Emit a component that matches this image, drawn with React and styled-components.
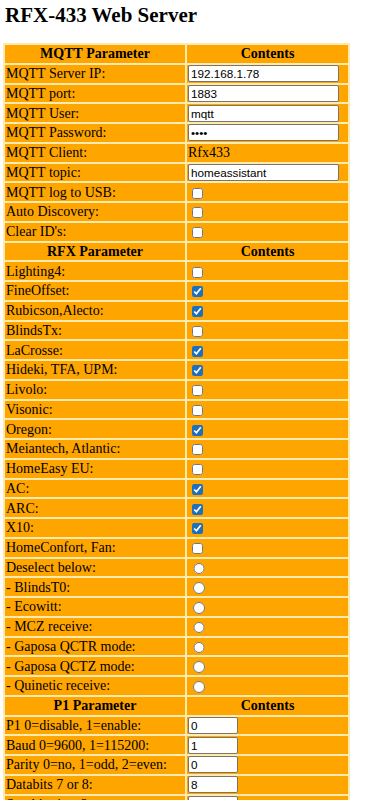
import React from "react";
import styled, { createGlobalStyle } from "styled-components";

const Global = createGlobalStyle`
  html, body { margin: 0; padding: 0; background: #ffffff; }
  body { font-family: "Liberation Serif", "Times New Roman", serif; color: #000; }
`;

const Page = styled.div`
  padding: 4px 0 0 0;
`;

const Title = styled.h1`
  margin: 0 0 16px 5px;
  font-family: "Liberation Serif", "Times New Roman", serif;
  font-size: 21px;
  line-height: 23px;
  font-weight: bold;
`;

const Table = styled.table`
  margin-left: 3px;
  border-collapse: separate;
  border-spacing: 2px;
  background: #ffeab0;
  font-size: 14px;
  table-layout: fixed;
  width: 347px;
`;

const Cell = styled.td`
  background: #ffa500;
  height: 17.76px;
  box-sizing: border-box;
  padding: 0 1px;
  vertical-align: middle;
  white-space: nowrap;
  line-height: 15px;
  font-weight: ${(p) => (p.$head ? "bold" : "normal")};
  text-align: ${(p) => (p.$head ? "center" : "left")};
  width: ${(p) => (p.$left ? "180px" : "auto")};
  overflow: hidden;
`;

const TextInput = styled.input`
  box-sizing: border-box;
  display: block;
  width: ${(p) => p.$w}px;
  height: 17px;
  margin: 0;
  padding: 0 2px;
  border: 1px solid #7d7468;
  border-radius: 2px;
  background: #fff;
  font-family: "Liberation Sans", Arial, sans-serif;
  font-size: 11.7px;
  color: #000;
  outline: none;
`;

const Check = styled.input`
  width: 11px;
  height: 11px;
  margin: 2px 0 0 4px;
  vertical-align: middle;
  accent-color: #1f6fba;
  display: block;
`;

const Radio = styled.input`
  width: 11.5px;
  height: 11.5px;
  margin: 2px 0 0 5px;
  display: block;
`;

const mqtt = [
  ["MQTT Server IP:", { t: "text", v: "192.168.1.78", w: 151 }],
  ["MQTT port:", { t: "text", v: "1883", w: 151 }],
  ["MQTT User:", { t: "text", v: "mqtt", w: 151 }],
  ["MQTT Password:", { t: "password", v: "abcd", w: 151 }],
  ["MQTT Client:", { t: "label", v: "Rfx433" }],
  ["MQTT topic:", { t: "text", v: "homeassistant", w: 151 }],
  ["MQTT log to USB:", { t: "check", c: false }],
  ["Auto Discovery:", { t: "check", c: false }],
  ["Clear ID's:", { t: "check", c: false }],
];

const rfx = [
  ["Lighting4:", false],
  ["FineOffset:", true],
  ["Rubicson,Alecto:", true],
  ["BlindsTx:", false],
  ["LaCrosse:", true],
  ["Hideki, TFA, UPM:", true],
  ["Livolo:", false],
  ["Visonic:", false],
  ["Oregon:", true],
  ["Meiantech, Atlantic:", false],
  ["HomeEasy EU:", false],
  ["AC:", true],
  ["ARC:", true],
  ["X10:", true],
  ["HomeConfort, Fan:", false],
];

const radios = [
  "Deselect below:",
  "- BlindsT0:",
  "- Ecowitt:",
  "- MCZ receive:",
  "- Gaposa QCTR mode:",
  "- Gaposa QCTZ mode:",
  "- Quinetic receive:",
];

const p1 = [
  ["P1 0=disable, 1=enable:", "0"],
  ["Baud 0=9600, 1=115200:", "1"],
  ["Parity 0=no, 1=odd, 2=even:", "0"],
  ["Databits 7 or 8:", "8"],
  ["Stopbits 1 or 2:", "1"],
];

function Value({ spec }) {
  if (spec.t === "label") return <>{spec.v}</>;
  if (spec.t === "check") return <Check type="checkbox" defaultChecked={spec.c} />;
  return <TextInput type={spec.t} defaultValue={spec.v} $w={spec.w} readOnly />;
}

function Head({ name }) {
  return (
    <tr>
      <Cell $head $left>{name}</Cell>
      <Cell $head>Contents</Cell>
    </tr>
  );
}

export default function App() {
  return (
    <Page>
      <Global />
      <Title>RFX-433 Web Server</Title>
      <Table>
        <tbody>
          <Head name="MQTT Parameter" />
          {mqtt.map(([label, spec]) => (
            <tr key={label}>
              <Cell $left>{label}</Cell>
              <Cell>
                <Value spec={spec} />
              </Cell>
            </tr>
          ))}
          <Head name="RFX Parameter" />
          {rfx.map(([label, c]) => (
            <tr key={label}>
              <Cell $left>{label}</Cell>
              <Cell>
                <Check type="checkbox" defaultChecked={c} />
              </Cell>
            </tr>
          ))}
          {radios.map((label) => (
            <tr key={label}>
              <Cell $left>{label}</Cell>
              <Cell>
                <Radio type="radio" name={label} />
              </Cell>
            </tr>
          ))}
          <Head name="P1 Parameter" />
          {p1.map(([label, v]) => (
            <tr key={label}>
              <Cell $left>{label}</Cell>
              <Cell>
                <TextInput type="text" defaultValue={v} $w={50} readOnly />
              </Cell>
            </tr>
          ))}
        </tbody>
      </Table>
    </Page>
  );
}
